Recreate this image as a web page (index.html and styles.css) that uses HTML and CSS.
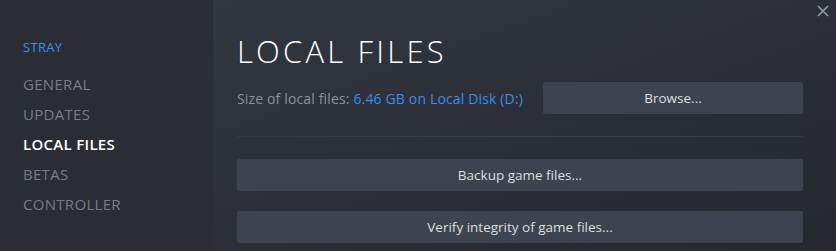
FILE: index.html
```html
<!DOCTYPE html>
<html>
<head>
<meta charset="utf-8">
<link rel="stylesheet" href="styles.css">
</head>
<body>
<div class="dialog">
  <nav class="sidebar">
    <div class="game">STRAY</div>
    <ul class="nav">
      <li>GENERAL</li>
      <li>UPDATES</li>
      <li class="active">LOCAL FILES</li>
      <li>BETAS</li>
      <li>CONTROLLER</li>
    </ul>
  </nav>
  <main class="content">
    <h1 class="title">LOCAL FILES</h1>
    <div class="size-row">
      <div class="size"><span class="label">Size of local files:</span> <span class="value">6.46 GB on Local Disk (D:)</span></div>
      <button class="btn browse">Browse...</button>
    </div>
    <hr class="sep">
    <button class="btn wide">Backup game files...</button>
    <button class="btn wide">Verify integrity of game files...</button>
  </main>
  <button class="close" aria-label="Close">
    <svg width="12" height="12" viewBox="0 0 12 12"><path d="M1 1 L11 11 M11 1 L1 11" stroke="#8e9aa6" stroke-width="1.6" fill="none"/></svg>
  </button>
</div>
</body>
</html>
```
FILE: styles.css
```css
html, body {
  margin: 0;
  padding: 0;
  width: 836px;
  height: 251px;
  overflow: hidden;
  background: #2b2e36;
}
.dialog {
  position: relative;
  display: flex;
  width: 836px;
  height: 251px;
  font-family: "Open Sans", "Noto Sans", sans-serif;
}
.sidebar {
  width: 213px;
  flex: none;
  background: #2a2d34;
  box-sizing: border-box;
  padding: 38px 0 0 23px;
}
.game {
  color: #3d8fe8;
  font-size: 13px;
  line-height: 18px;
  letter-spacing: 0.3px;
  margin-bottom: 13px;
}
.nav {
  list-style: none;
  margin: 0;
  padding: 0;
}
.nav li {
  color: #7a7d82;
  font-size: 15px;
  line-height: 30px;
  letter-spacing: 0.3px;
  font-weight: 500;
}
.nav li.active {
  color: #ffffff;
  font-weight: 600;
}
.content {
  flex: 1;
  background: linear-gradient(160deg, #32363f 0%, #2b2e36 55%, #25282f 100%);
  box-sizing: border-box;
  padding: 30px 33px 0 24px;
  display: flex;
  flex-direction: column;
}
.title {
  margin: 0;
  font-weight: 300;
  font-size: 31px;
  line-height: 42px;
  letter-spacing: 3.2px;
  color: #ffffff;
}
.size-row {
  display: flex;
  align-items: center;
  justify-content: space-between;
  margin-top: 10px;
}
.size {
  font-size: 14px;
  letter-spacing: 0.15px;
  color: #8b929a;
}
.value {
  color: #3c8ce7;
}
.btn {
  flex: none;
  border: none;
  border-radius: 2px;
  background: #3d4450;
  color: #dcdedf;
  font-family: "Open Sans", "Noto Sans", sans-serif;
  font-size: 13.5px;
  height: 32px;
  padding: 0;
  cursor: pointer;
}
.browse {
  width: 260px;
}
.sep {
  flex: none;
  border: none;
  height: 1px;
  background: #363a43;
  margin: 22px 0 22px 0;
}
.wide {
  width: 100%;
  margin-bottom: 20px;
}
.close {
  position: absolute;
  top: 4px;
  right: 6px;
  background: none;
  border: none;
  padding: 0;
  width: 14px;
  height: 14px;
  display: flex;
  align-items: center;
  justify-content: center;
}
```
